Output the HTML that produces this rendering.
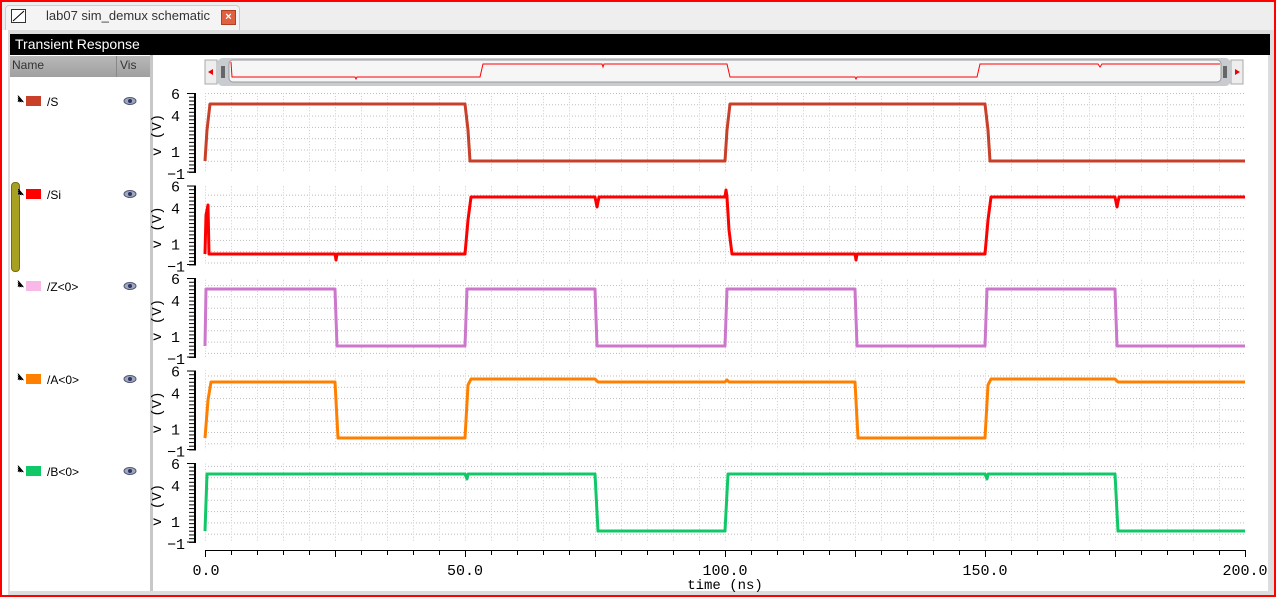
<!DOCTYPE html>
<html><head><style>
body{margin:0;width:1276px;height:597px;overflow:hidden;background:#fff;font-family:"Liberation Sans",sans-serif;position:relative}
.a{position:absolute}
</style></head><body>
<div class="a" style="left:0;top:0;width:1272px;height:593px;border:2px solid #f00"></div>
<div class="a" style="top:2px;left:2px;width:1272px;height:28px;background:#eee"></div>
<div class="a" style="left:5px;top:5px;width:233px;height:24px;background:#f4f4f4;border:1px solid #ccc;border-bottom:none;border-radius:4px 4px 0 0"></div>
<div class="a" style="left:11px;top:9px;width:13px;height:12px;border:1px solid #333;background:#fff"></div>
<svg class="a" style="left:11px;top:9px" width="15" height="14"><line x1="2" y1="12" x2="13" y2="2" stroke="#000"/></svg>
<div class="a" style="left:46px;top:8px;font-size:13px;color:#333">lab07 sim_demux schematic</div>
<div class="a" style="left:221px;top:10px;width:13px;height:13px;background:#e06040;border:1px solid #b04020;color:#fff;font-size:11px;line-height:13px;text-align:center;font-weight:bold">×</div>
<div class="a" style="left:8px;top:30px;width:1266px;height:565px;background:#ddd"></div>
<div class="a" style="left:10px;top:34px;width:1260px;height:21px;background:#000;color:#fff;font-size:14px;line-height:21px;padding-left:5px;box-sizing:border-box">Transient Response</div>
<div class="a" style="left:10px;top:55px;width:140px;height:536px;background:#fff"></div>
<div class="a" style="left:10px;top:56px;width:140px;height:21px;background:linear-gradient(#b8b8b8,#a0a0a0);font-size:12px;color:#333"><span class="a" style="left:2px;top:2px">Name</span><span class="a" style="left:106px;top:0;width:1px;height:21px;background:#888"></span><span class="a" style="left:110px;top:2px">Vis</span></div>
<div class="a" style="left:150px;top:55px;width:3px;height:536px;background:#c8c8c8"></div>
<div class="a" style="left:153px;top:55px;width:1115px;height:536px;background:#fff"></div>
<div class="a" style="left:11px;top:182px;width:7px;height:88px;background:#a8a020;border:1px solid #707010;border-radius:4px"></div>
<div class="a" style="left:10px;top:591px;width:1264px;height:2px;background:#ddd"></div>

<svg class="a" style="left:0;top:0" width="1276" height="597">
<defs>
<pattern id="g" x="205" y="93" width="26" height="11.3" patternUnits="userSpaceOnUse">
<line x1="0" y1="0.5" x2="26" y2="0.5" stroke="#bbb" stroke-dasharray="1,2"/>
<line x1="0.5" y1="0" x2="0.5" y2="11.3" stroke="#ccc" stroke-dasharray="1,2"/>
</pattern>
<pattern id="tk" x="0" y="93" width="8" height="3.76" patternUnits="userSpaceOnUse">
<rect x="0" y="0" width="8" height="1" fill="#000"/>
</pattern>
<g id="eye"><ellipse cx="0" cy="0" rx="6" ry="3.5" fill="#9ab" stroke="#557"/><circle cx="0" cy="0" r="2" fill="#336"/></g>
</defs>
<g font-size="12" fill="#000" font-family="Liberation Sans">
<g stroke="#999" stroke-dasharray="1,1"><path d="M18 95v7h6M18 188v7h6M18 280v7h6M18 373v7h6M18 465v7h6"/></g>
<rect x="26" y="96" width="15" height="10" fill="#c8402a"/><text x="47" y="106">/S</text>
<rect x="26" y="189" width="15" height="10" fill="#f00"/><text x="47" y="199">/Si</text>
<rect x="26" y="281" width="15" height="10" fill="#f8b8e8"/><text x="47" y="291">/Z&lt;0&gt;</text>
<rect x="26" y="374" width="15" height="10" fill="#ff8000"/><text x="47" y="384">/A&lt;0&gt;</text>
<rect x="26" y="466" width="15" height="10" fill="#10c868"/><text x="47" y="476">/B&lt;0&gt;</text>
<use href="#eye" x="130" y="101"/><use href="#eye" x="130" y="194"/><use href="#eye" x="130" y="286"/><use href="#eye" x="130" y="379"/><use href="#eye" x="130" y="471"/>
</g>
<rect x="205" y="60" width="12" height="24" fill="#eee" stroke="#aaa"/><path d="M208 72l5-3v6z" fill="#e00"/>
<rect x="1231" y="60" width="12" height="24" fill="#eee" stroke="#aaa"/><path d="M1240 72l-5-3v6z" fill="#e00"/>
<rect x="217" y="58" width="1014" height="28" rx="6" fill="#c8ccd0"/>
<rect x="229" y="60" width="992" height="22" rx="4" fill="#f6f6f6" stroke="#999"/>
<path d="M222 66v12M224 66v12M1224 66v12M1226 66v12" stroke="#000"/>
<polyline fill="none" stroke="#f00" points="231,62 232,77 355,77 356,79 357,77 480,77 483,64 602,64 603,67 604,64 727,64 730,77 855,77 856,79 857,77 977,77 980,64 1098,64 1100,67 1102,64 1220,64"/>
<g fill="url(#g)">
<rect x="205" y="93" width="1040" height="79"/><rect x="205" y="185.5" width="1040" height="79"/><rect x="205" y="278" width="1040" height="79"/><rect x="205" y="370.5" width="1040" height="79"/><rect x="205" y="463" width="1040" height="79"/>
</g>
<g id="p1" font-family="Liberation Mono" font-size="15" fill="#000">
<text x="180" y="99" text-anchor="end">6</text><text x="180" y="121" text-anchor="end">4</text><text x="180" y="157" text-anchor="end">1</text><text x="185" y="179" text-anchor="end">−1</text>
<text x="161" y="135" transform="rotate(-90 161 135)" font-size="14" text-anchor="middle">v (V)</text>
<rect x="189" y="93" width="5" height="80" fill="url(#tk)"/>
<rect x="194" y="93" width="2" height="80" fill="#000"/>
<rect x="187" y="93" width="7" height="1" fill="#000"/><rect x="187" y="171.5" width="7" height="1" fill="#000"/>
</g>
<use href="#p1" y="92.5"/><use href="#p1" y="185"/><use href="#p1" y="277.5"/><use href="#p1" y="370"/>
<g fill="none" stroke-width="3" stroke-linejoin="round">
<polyline stroke="#c8402a" points="205,161 207,130 210,104 465,104 468,130 470,161 725,161 727,130 730,104 985,104 988,130 990,161 1245,161"/>
<polyline stroke="#f00" points="205,254 206,215 208,205 209,254 335,254 336,260 337,254 465,254 468,220 471,197 595,197 597,207 599,197 725,197 726,190 727,197 729,230 732,254 855,254 856,260 857,254 985,254 988,220 991,197 1115,197 1117,207 1119,197 1245,197"/>
<polyline stroke="#cc77cc" points="205,346 206,289 335,289 337,346 465,346 467,289 595,289 597,346 725,346 727,289 855,289 857,346 985,346 987,289 1115,289 1117,346 1245,346"/>
<polyline stroke="#ff8000" points="205,438 208,400 211,382 335,382 338,438 465,438 468,385 471,379 595,379 598,382 725,382 727,380 729,382 855,382 858,438 985,438 988,385 991,379 1115,379 1118,382 1245,382"/>
<polyline stroke="#10c868" points="205,531 207,474 465,474 467,479 468,474 595,474 598,531 725,531 728,474 985,474 987,479 988,474 1115,474 1118,531 1245,531"/>
</g>
<path d="M205 550.5h1040" stroke="#000"/>
<g stroke="#000" id="xt">
<path d="M205.5 550v7M231.5 550v5M257.5 550v5M283.5 550v5M309.5 550v5M335.5 550v7M361.5 550v5M387.5 550v5M413.5 550v5M439.5 550v5"/>
</g>
<use href="#xt" x="260"/><use href="#xt" x="520"/><use href="#xt" x="780"/>
<path d="M1245.5 550v7" stroke="#000"/>
<g font-family="Liberation Mono" font-size="15" fill="#000" text-anchor="middle">
<text x="206" y="575">0.0</text><text x="465" y="575">50.0</text><text x="725" y="575">100.0</text><text x="985" y="575">150.0</text><text x="1245" y="575">200.0</text>
<text x="725" y="589" font-size="14">time (ns)</text>
</g>
</svg>
</body></html>
